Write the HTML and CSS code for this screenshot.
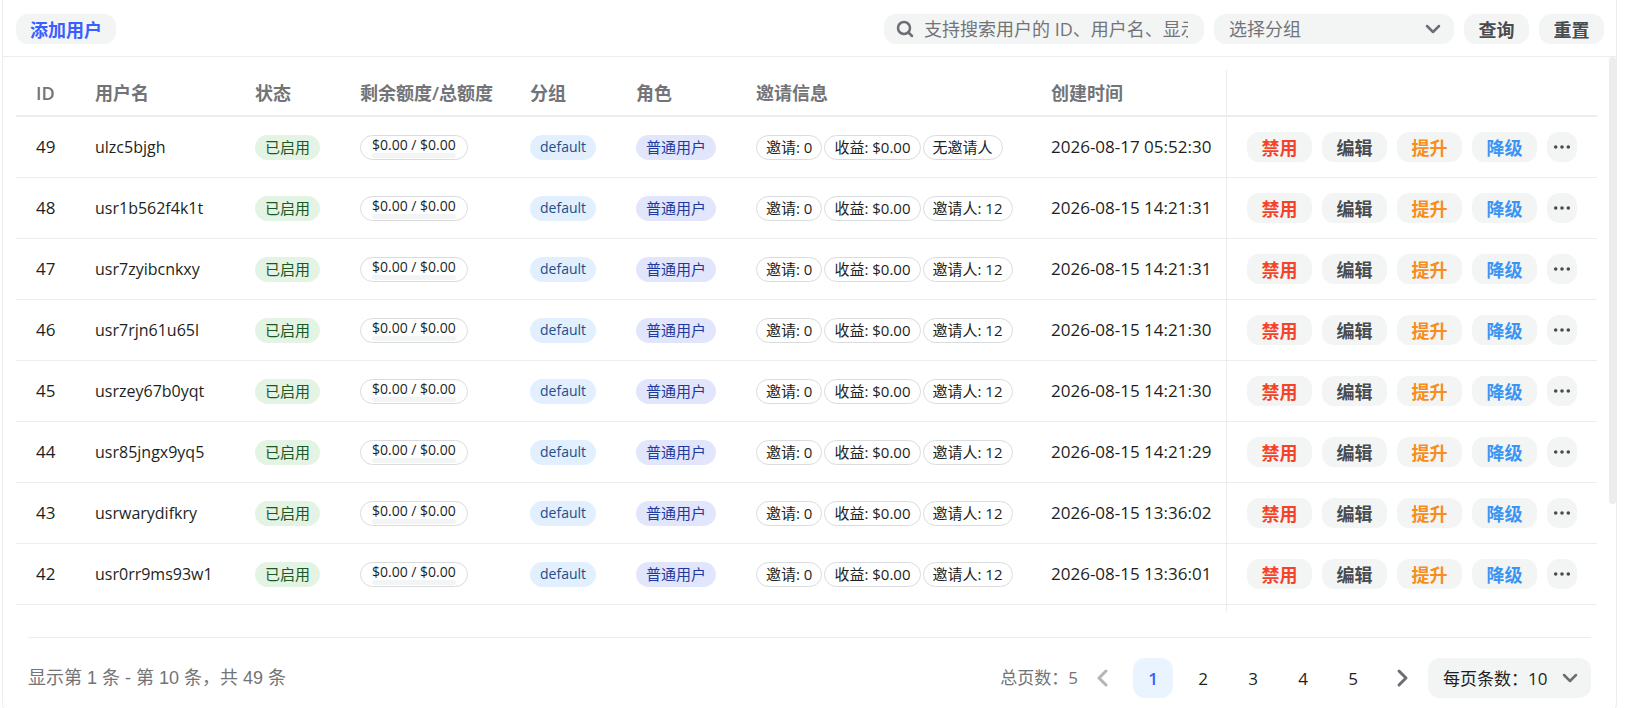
FILE: index.html
```html
<!DOCTYPE html>
<html lang="zh-CN">
<head>
    <meta charset="UTF-8">
    <meta name="viewport" content="width=device-width, initial-scale=1.0">
    <title>用户管理</title>
    <link rel="stylesheet" href="styles.css">
</head>
<body>
    <main class="card">
        <header class="toolbar">
            <button type="button" class="btn btn-primary">添加用户</button>

            <form class="search-form" id="search-form">
                <label class="search-box">
                    <svg class="icon-search" viewBox="0 0 20 20" aria-hidden="true">
                        <circle cx="9" cy="9" r="6"/>
                        <path d="M13.5 13.5L17 17"/>
                    </svg>
                    <input type="text" class="search-input" aria-label="搜索用户" placeholder="支持搜索用户的 ID、用户名、显示名称和邮箱地址">
                </label>
                <div class="select-box group-select">
                    <select aria-label="选择分组">
                        <option>选择分组</option>
                        <option>default</option>
                    </select>
                    <svg class="icon-down" viewBox="0 0 20 20" aria-hidden="true"><path d="M4 7l6 6 6-6"/></svg>
                </div>
                <button type="submit" class="btn">查询</button>
                <button type="reset" class="btn">重置</button>
            </form>
        </header>

        <section class="card-body">
            <div class="scroll-thumb"></div>

            <div class="table-wrap">
                <table class="user-table">
                    <colgroup>
                        <col class="col-id">
                        <col class="col-name">
                        <col class="col-status">
                        <col class="col-quota">
                        <col class="col-group">
                        <col class="col-role">
                        <col class="col-invite">
                        <col class="col-time">
                        <col class="col-action">
                    </colgroup>
                    <thead>
                        <tr>
                            <th>ID</th>
                            <th>用户名</th>
                            <th>状态</th>
                            <th>剩余额度/总额度</th>
                            <th>分组</th>
                            <th>角色</th>
                            <th>邀请信息</th>
                            <th>创建时间</th>
                            <th class="fixed-col"></th>
                        </tr>
                    </thead>
                    <tbody id="user-rows"></tbody>
                    <tfoot>
                        <tr>
                            <td colspan="8"></td>
                            <td class="fixed-col"></td>
                        </tr>
                    </tfoot>
                </table>
            </div>

            <footer class="table-footer">
                <span class="range-info">显示第 1 条 - 第 10 条，共 49 条</span>
                <nav class="pager" aria-label="分页">
                    <span class="page-total">总页数：5</span>
                    <button type="button" class="page-btn" aria-label="上一页" disabled>
                        <svg class="icon-page" viewBox="0 0 20 20" aria-hidden="true"><path d="M13 3L6 10l7 7"/></svg>
                    </button>
                    <button type="button" class="page-btn active">1</button>
                    <button type="button" class="page-btn">2</button>
                    <button type="button" class="page-btn">3</button>
                    <button type="button" class="page-btn">4</button>
                    <button type="button" class="page-btn">5</button>
                    <button type="button" class="page-btn" aria-label="下一页">
                        <svg class="icon-page" viewBox="0 0 20 20" aria-hidden="true"><path d="M6 3l7 7-7 7"/></svg>
                    </button>
                </nav>
                <div class="select-box size-select">
                    <select aria-label="每页条数">
                        <option>每页条数：10</option>
                        <option>每页条数：20</option>
                        <option>每页条数：50</option>
                    </select>
                    <svg class="icon-down" viewBox="0 0 20 20" aria-hidden="true"><path d="M4 7l6 6 6-6"/></svg>
                </div>
            </footer>
        </section>
    </main>

    <script>
        const users = [
            { id: 49, name: "ulzc5bjgh", inviter: "无邀请人", created: "2026-08-17 05:52:30" },
            { id: 48, name: "usr1b562f4k1t", inviter: "邀请人: 12", created: "2026-08-15 14:21:31" },
            { id: 47, name: "usr7zyibcnkxy", inviter: "邀请人: 12", created: "2026-08-15 14:21:31" },
            { id: 46, name: "usr7rjn61u65l", inviter: "邀请人: 12", created: "2026-08-15 14:21:30" },
            { id: 45, name: "usrzey67b0yqt", inviter: "邀请人: 12", created: "2026-08-15 14:21:30" },
            { id: 44, name: "usr85jngx9yq5", inviter: "邀请人: 12", created: "2026-08-15 14:21:29" },
            { id: 43, name: "usrwarydifkry", inviter: "邀请人: 12", created: "2026-08-15 13:36:02" },
            { id: 42, name: "usr0rr9ms93w1", inviter: "邀请人: 12", created: "2026-08-15 13:36:01" }
        ];

        document.getElementById("user-rows").innerHTML = users.map((user) => `
            <tr>
                <td>${user.id}</td>
                <td class="user-name">${user.name}</td>
                <td><span class="tag tag-green">已启用</span></td>
                <td>
                    <div class="tag tag-line quota">
                        <span>$0.00 / $0.00</span>
                        <div class="quota-bar"></div>
                    </div>
                </td>
                <td><span class="tag tag-blue">default</span></td>
                <td><span class="tag tag-indigo">普通用户</span></td>
                <td>
                    <div class="invite">
                        <span class="tag tag-line">邀请: 0</span>
                        <span class="tag tag-line">收益: $0.00</span>
                        <span class="tag tag-line">${user.inviter}</span>
                    </div>
                </td>
                <td>${user.created}</td>
                <td class="fixed-col">
                    <div class="actions">
                        <button type="button" class="btn btn-danger">禁用</button>
                        <button type="button" class="btn">编辑</button>
                        <button type="button" class="btn btn-warning">提升</button>
                        <button type="button" class="btn btn-secondary">降级</button>
                        <button type="button" class="btn btn-more" aria-label="更多">
                            <svg class="icon-more" viewBox="0 0 20 20" aria-hidden="true">
                                <circle cx="3" cy="10" r="2"/><circle cx="10" cy="10" r="2"/><circle cx="17" cy="10" r="2"/>
                            </svg>
                        </button>
                    </div>
                </td>
            </tr>`).join("");

        document.getElementById("search-form").addEventListener("submit", (event) => {
            event.preventDefault();
        });
    </script>
</body>
</html>
```
FILE: styles.css
```css
* {
    box-sizing: border-box;
}

body {
    margin: 0;
    padding: 0 21px 0 2px;
    height: 100vh;
    overflow: hidden;
    background: #fff;
    color: #1c1f23;
    font-family: "Open Sans", "Noto Sans CJK SC", sans-serif;
    font-size: 17px;
    line-height: 24px;
}

button, input, select {
    font-family: inherit;
    border: none;
    outline: none;
}

.card {
    border: 1px solid #ededee;
    border-top: none;
    border-radius: 0 0 12px 12px;
}

/* Toolbar */
.toolbar {
    display: flex;
    justify-content: space-between;
    align-items: center;
    padding: 14px 12px 12px 13px;
    border-bottom: 1px solid #ededee;
}

.search-form {
    display: flex;
    gap: 10px;
}

.btn {
    display: flex;
    justify-content: center;
    align-items: center;
    height: 30px;
    min-width: 65px;
    padding: 0 14px;
    border-radius: 12px;
    background: #f3f5f5;
    color: #494c4f;
    font-size: 18px;
    font-weight: 700;
    cursor: pointer;
}

.btn-primary {
    color: #3a5eff;
}

.btn-danger {
    color: #f5432a;
}

.btn-warning {
    color: #f78d1e;
}

.btn-secondary {
    color: #3a94f3;
}

.btn-more {
    min-width: 30px;
    padding: 0;
}

.icon-more {
    width: 18px;
    height: 18px;
    fill: #494c4f;
}

.search-box {
    display: flex;
    align-items: center;
    gap: 9px;
    width: 320px;
    height: 30px;
    padding: 0 16px 0 11px;
    border-radius: 12px;
    background: #f3f5f5;
}

.search-input {
    flex: 1;
    min-width: 0;
    padding: 0;
    background: none;
    font-size: 18px;
    color: #1c1f23;
}

.search-input::placeholder {
    color: #727477;
    opacity: 1;
}

.icon-search, .icon-down, .icon-page {
    flex: none;
    width: 20px;
    height: 20px;
    fill: none;
    stroke: #6b6e72;
    stroke-width: 2.5;
    stroke-linecap: round;
    stroke-linejoin: round;
}

.icon-page {
    stroke-width: 3;
}

.select-box {
    display: grid;
    align-items: center;
    border-radius: 12px;
    background: #f3f5f5;
}

.select-box select,
.select-box svg {
    grid-area: 1 / 1;
}

.select-box select {
    appearance: none;
    width: 100%;
    height: 100%;
    padding: 0 36px 0 15px;
    background: none;
    color: inherit;
    font-size: inherit;
}

.select-box svg {
    justify-self: end;
    margin-right: 11px;
    pointer-events: none;
}

.group-select {
    width: 240px;
    height: 30px;
    color: #727477;
    font-size: 18px;
}

/* Body */
.card-body {
    position: relative;
    padding: 13px 19px 16px 13px;
}

.scroll-thumb {
    position: absolute;
    top: 0;
    right: 0;
    width: 7px;
    height: 68%;
    border-radius: 4px;
    background: #ededef;
}

.user-table {
    width: 100%;
    table-layout: fixed;
    border-collapse: separate;
    border-spacing: 0;
}

.col-id { width: 59px; }
.col-name { width: 160px; }
.col-status { width: 105px; }
.col-quota { width: 170px; }
.col-group { width: 106px; }
.col-role { width: 120px; }
.col-time { width: 195px; }
.col-action { width: 371px; }

.user-table th {
    height: 47px;
    padding: 0 0 0 20px;
    border-bottom: 2px solid #ededee;
    color: #727477;
    font-size: 18px;
    font-weight: 600;
    text-align: left;
    white-space: nowrap;
}

.user-table td {
    height: 61px;
    padding: 0 0 0 20px;
    border-bottom: 1px solid #ededee;
    white-space: nowrap;
}

.user-table .user-name {
    font-size: 16px;
}

.user-table .fixed-col {
    border-left: 1px solid #ededee;
}

.user-table tfoot td {
    height: 7px;
    border-bottom: none;
}

.actions {
    display: flex;
    gap: 10px;
}

/* Tags */
.tag {
    display: flex;
    align-items: center;
    width: fit-content;
    height: 25px;
    padding: 0 10px;
    border-radius: 13px;
    font-size: 15px;
    line-height: 20px;
}

.tag-green {
    background: #e4f4e4;
    color: #1b5924;
}

.tag-blue {
    background: #e1effe;
    color: #1d4f8c;
    font-size: 14px;
}

.tag-indigo {
    background: #e1e6fd;
    color: #1e3a9e;
}

.tag-line {
    border: 1px solid #d9dcde;
    padding: 0 9px;
}

.invite {
    display: flex;
    gap: 2px;
}

.quota {
    flex-direction: column;
    align-items: stretch;
    padding: 0 11px;
    font-size: 14px;
    line-height: 17px;
}

.quota-bar {
    height: 5px;
    border-radius: 3px;
    background: #f3f5f5;
}

/* Footer */
.table-footer {
    display: flex;
    align-items: center;
    margin: 25px 6px 0 12px;
    padding-top: 20px;
    border-top: 1px solid #ededee;
}

.range-info {
    margin-right: auto;
    color: #727477;
    font-family: "Liberation Sans", "Noto Sans CJK SC", sans-serif;
    font-size: 18px;
}

.pager {
    display: flex;
    align-items: center;
    gap: 10px;
    margin-right: 5px;
}

.page-total {
    margin-right: -5px;
    color: #727477;
}

.page-btn {
    display: flex;
    justify-content: center;
    align-items: center;
    width: 40px;
    height: 40px;
    padding: 0;
    border-radius: 12px;
    background: none;
    color: #1c1f23;
    font-size: 17px;
    cursor: pointer;
}

.page-btn.active {
    background: #eaf4ff;
    color: #3a5eff;
    font-weight: 600;
}

.page-btn:disabled {
    opacity: 0.5;
    cursor: not-allowed;
}

.size-select {
    width: 163px;
    height: 40px;
}
```
